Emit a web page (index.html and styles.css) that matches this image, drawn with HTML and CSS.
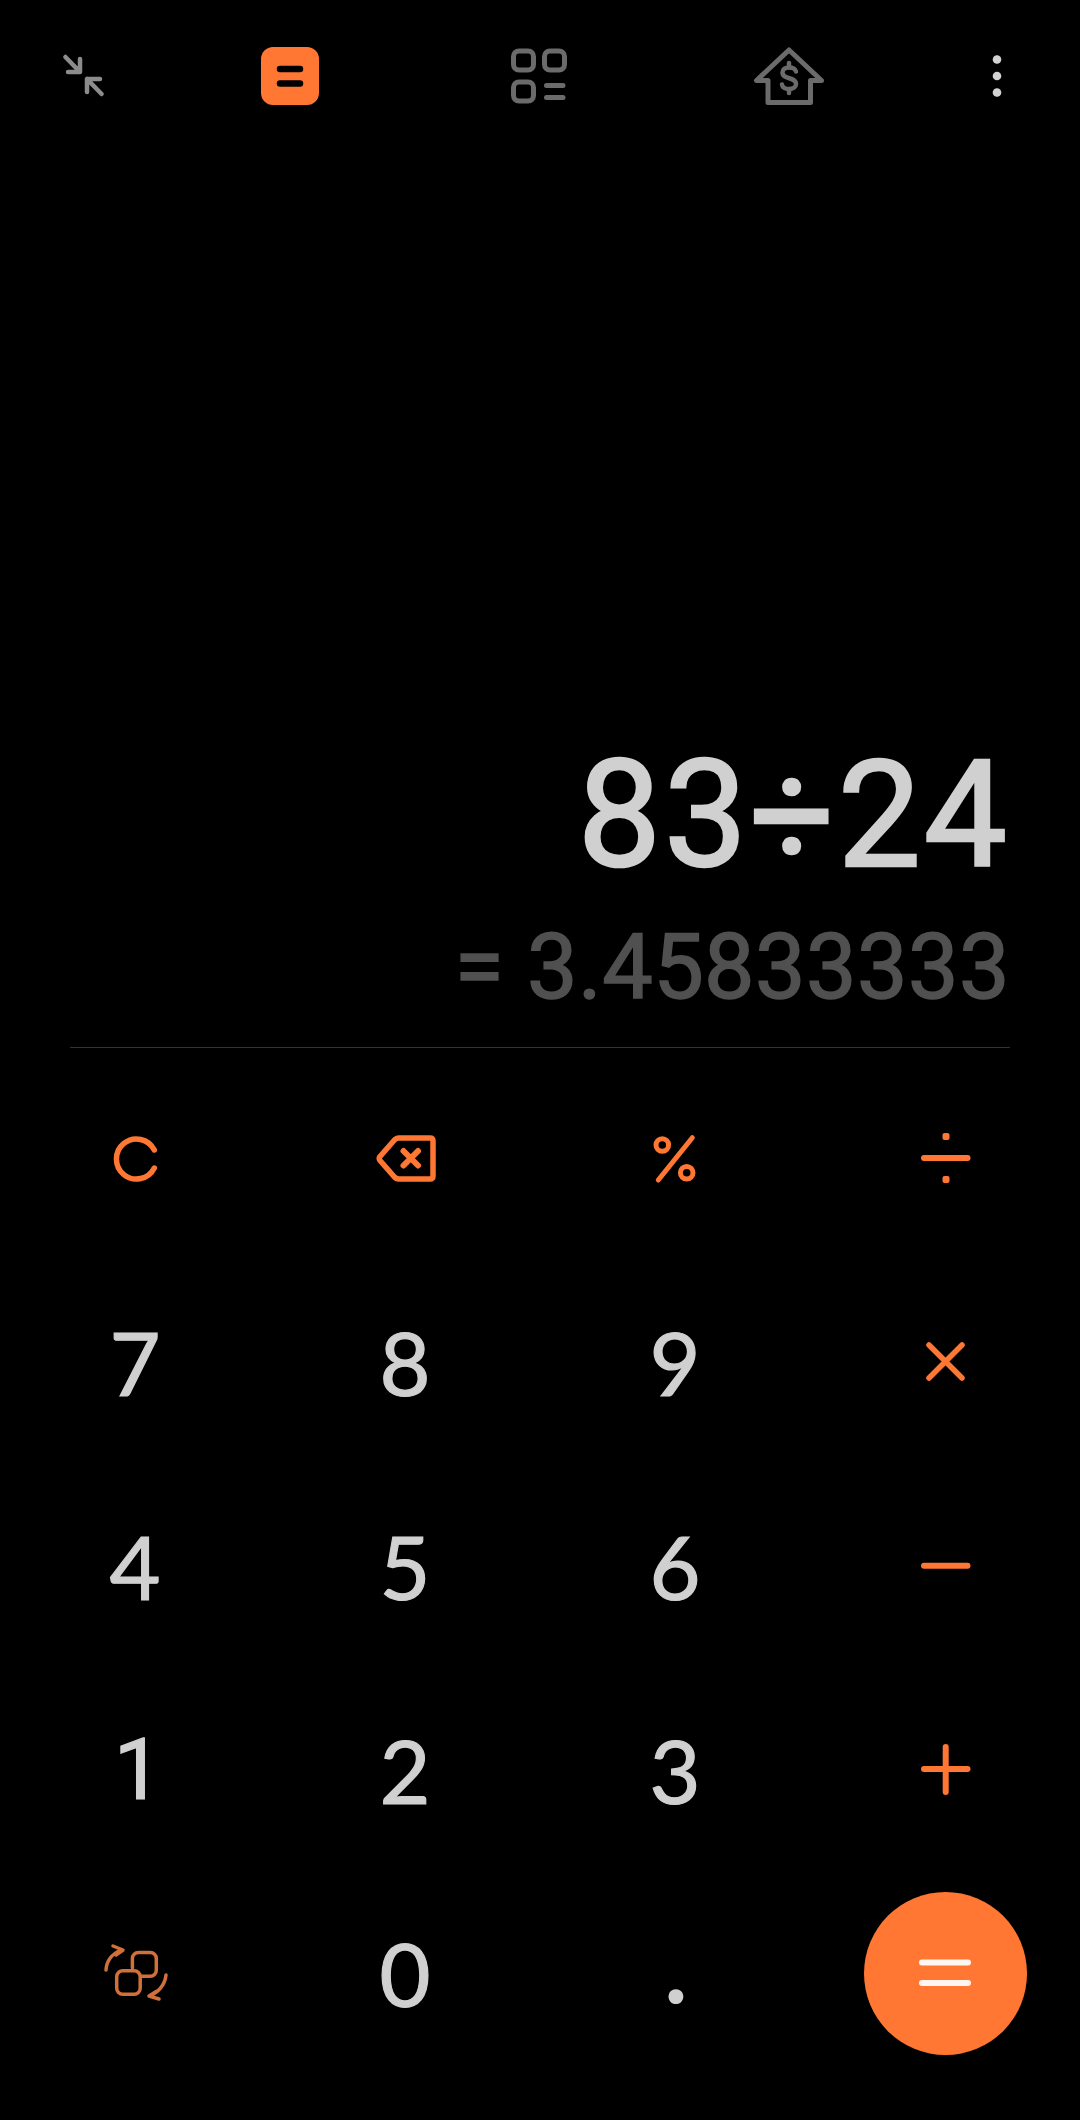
FILE: index.html
```html
<!DOCTYPE html>
<html lang="en">
<head>
<meta charset="utf-8">
<title>Calculator</title>
<link rel="stylesheet" href="styles.css">
</head>
<body>
<main class="app">
  <header class="topbar">
    <div class="slot slot-a">
      <svg class="ico" viewBox="0 0 64 64"><g class="st-grey"><path d="M14.4 13L29 28M29 15V28H17"/><path d="M50.6 50L36 35M36 48V35H49"/></g></svg>
    </div>
    <div class="slot slot-b">
      <svg class="ico" viewBox="0 0 64 64"><rect class="fill-orange" x="3" y="3" width="58" height="58" rx="12"/><path class="st-black" d="M22 25H42M22 39.500H42"/></svg>
    </div>
    <div class="slot slot-c">
      <svg class="ico" viewBox="0 0 64 64"><g class="st-dim"><rect x="6.500" y="7" width="20" height="19" rx="5.500"/><rect x="6.500" y="38" width="20" height="19" rx="5.500"/><rect x="37.500" y="7" width="20" height="19" rx="5.500"/><path d="M39.500 41.500H56M39.500 53.500H56"/></g></svg>
    </div>
    <div class="slot slot-d">
      <svg class="ico" viewBox="0 0 64 64"><g class="st-dim"><path d="M32 6L-0.500 36.500H11V58.500H53.500V36.500H64.500Z"/><path class="st-thin" d="M39 27.500C38 24 35 23.500 32 23.500C28 23.500 25.500 25.500 25.500 28.500C25.500 36 39 32.500 39 40C39 43 36 45 32 45C28 45 25.500 43.500 25 40.500M32 19V23M32 45V49"/></g></svg>
    </div>
    <div class="slot slot-e">
      <svg class="ico" viewBox="0 0 64 64"><circle class="fill-light" cx="32" cy="15.500" r="4.300"/><circle class="fill-light" cx="32" cy="32" r="4.300"/><circle class="fill-light" cx="32" cy="48.500" r="4.300"/></svg>
    </div>
  </header>

  <section class="display">
    <div class="expr">83÷24</div>
    <div class="result">= 3.45833333</div>
  </section>
  <hr class="rule">

  <section class="keys">
    <div class="key"><svg class="ico" viewBox="0 0 64 64"><path class="st-orange st-c" d="M51.300 24A20 20 0 1 0 51.300 42"/></svg></div>
    <div class="key"><svg class="ico" viewBox="0 0 64 64"><path class="st-orange st-back" d="M7 30.500L21 14.500Q23 12 26 12H57Q60 12 60 15V50Q60 53 57 53H26Q23 53 21 50.500L7 34.500Q5.500 32.500 7 30.500Z"/><path class="st-orange st-op" d="M30.500 25L45 39.500M45 25L30.500 39.500"/></svg></div>
    <div class="key"><svg class="ico" viewBox="0 0 64 64"><g class="st-pct"><circle cx="19.300" cy="19" r="6.300"/><circle cx="43.700" cy="46.700" r="6.300"/><path d="M49.300 11.700L15.300 54"/></g></svg></div>
    <div class="key"><svg class="ico" viewBox="0 0 64 64"><path class="st-orange st-op" d="M11 32H54.500"/><rect class="fill-orange" x="29.500" y="7" width="7" height="7" rx="2"/><rect class="fill-orange" x="29.500" y="50" width="7" height="7" rx="2"/></svg></div>

    <div class="key digit">7</div>
    <div class="key digit">8</div>
    <div class="key digit">9</div>
    <div class="key"><svg class="ico" viewBox="0 0 64 64"><path class="st-orange st-x" d="M16 15L49 48M49 15L16 48"/></svg></div>

    <div class="key digit">4</div>
    <div class="key digit">5</div>
    <div class="key digit">6</div>
    <div class="key"><svg class="ico" viewBox="0 0 64 64"><path class="st-orange st-op" d="M11 31.700H54.500"/></svg></div>

    <div class="key digit one">1</div>
    <div class="key digit">2</div>
    <div class="key digit">3</div>
    <div class="key"><svg class="ico" viewBox="0 0 64 64"><path class="st-orange st-op" d="M11 31H54.500M32.700 9V54"/></svg></div>

    <div class="key"><svg class="ico" viewBox="0 0 64 64"><g class="st-swap"><path d="M3 29C3.500 20 9 13 18 9M10 5L20 9L13 14"/><path d="M29.400 27V17.400A6 6 0 0 1 35.400 11.400H47.300A6 6 0 0 1 53.300 17.400V29.300A6 6 0 0 1 47.300 35.300H38"/><rect x="13.700" y="29.700" width="23.500" height="23.500" rx="6"/><path d="M63 34C62 44 55 52 46 55M56 58L46 55L54 50"/></g></svg></div>
    <div class="key digit">0</div>
    <div class="key digit dot">.</div>
    <div class="key">
      <div class="equals"><svg class="ico" viewBox="0 0 64 64"><path class="st-white" d="M9 21.500H55M9 42H55"/></svg></div>
    </div>
  </section>
</main>
</body>
</html>
```
FILE: styles.css
```css
* { box-sizing: border-box; }
html, body { margin: 0; padding: 0; background: #000; }
.app {
  width: 1080px;
  height: 2120px;
  background: #000;
  overflow: hidden;
  display: flex;
  flex-direction: column;
}
.topbar { height: 151px; display: flex; align-items: center; flex: none; }
.slot { display: flex; align-items: center; justify-content: center; }
.slot-a { width: 166px; }
.slot-b { width: 248px; }
.slot-c { width: 250px; }
.slot-d { width: 250px; }
.slot-e { width: 166px; }
.ico { width: 64px; height: 64px; display: block; overflow: visible; }
svg path, svg rect, svg circle { fill: none; stroke-linecap: round; stroke-linejoin: round; }
.st-grey path { stroke: #8c8c8c; stroke-width: 4.5; }
.st-dim path, .st-dim rect { stroke: #6b6b6b; stroke-width: 5; }
.st-dim .st-thin { stroke-width: 4.5; }
.st-black { stroke: #000; stroke-width: 6.5; }
.st-orange { stroke: #ff7733; stroke-width: 5; }
.st-c { stroke-width: 5.5; }
.st-back { stroke-width: 5.5; }
.st-pct circle, .st-pct path { stroke: #ff7733; stroke-width: 5; }
.st-op { stroke-width: 6; }
.st-x { stroke-width: 5.5; }
.st-swap path, .st-swap rect { stroke: #d0703a; stroke-width: 3.5; }
.st-white { stroke: #fff6ef; stroke-width: 6; }
svg .fill-orange { fill: #ff7733; }
svg .fill-light { fill: #d2d2d2; }
.display {
  flex: 1;
  display: flex;
  flex-direction: column;
  justify-content: flex-end;
  align-items: flex-end;
  padding-right: 70px;
  font-family: Roboto, sans-serif;
  white-space: nowrap;
}
.expr { font-size: 148px; line-height: 170px; color: #d0d0d0; letter-spacing: 3px; margin-bottom: 17px; -webkit-text-stroke: 2.5px #d0d0d0; }
.result { font-size: 90px; line-height: 100px; color: #505050; letter-spacing: 0.4px; margin-bottom: 29px; -webkit-text-stroke: 1.5px #505050; }
.rule { flex: none; width: 940px; height: 1px; margin: 0 0 8px 70px; border: 0; background: #333; }
.keys {
  flex: none;
  display: grid;
  grid-template-columns: repeat(4, 270px);
  grid-template-rows: repeat(4, 204px) 202px;
  padding-bottom: 46px;
  height: 1064px;
}
.key { display: flex; align-items: center; justify-content: center; }
.digit { font-family: Lato, sans-serif; font-size: 88px; line-height: 1; color: #d0d0d0; -webkit-text-stroke: 1.2px #d0d0d0; }
.one { font-family: Roboto, sans-serif; font-size: 86px; padding-left: 6px; }
.dot { font-size: 118px; padding-bottom: 30px; -webkit-text-stroke: 0; padding-left: 2px; }
.equals {
  width: 163px;
  height: 163px;
  border-radius: 50%;
  background: #ff7733;
  display: flex;
  align-items: center;
  justify-content: center;
}
```
